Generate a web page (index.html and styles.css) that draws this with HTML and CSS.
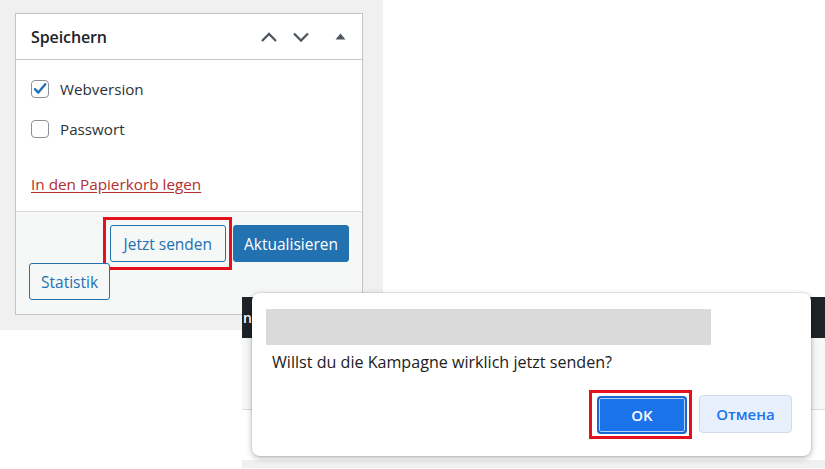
FILE: index.html
```html
<!DOCTYPE html>
<html lang="de">
<head>
<meta charset="utf-8">
<title>Speichern</title>
<link rel="stylesheet" href="styles.css">
</head>
<body>
<div class="page">
  <div class="wp-area">
    <div class="postbox">
      <div class="pb-header">
        <h2 class="pb-title">Speichern</h2>
        <div class="pb-actions">
          <svg class="ico chev" width="18" height="12" viewBox="0 0 18 12"><path d="M2 10 L9 3 L16 10" fill="none" stroke="#50575e" stroke-width="2.3"/></svg>
          <svg class="ico chev" width="18" height="12" viewBox="0 0 18 12"><path d="M2 2.5 L9 9.5 L16 2.5" fill="none" stroke="#50575e" stroke-width="2.3"/></svg>
          <svg class="ico tri" width="11" height="7" viewBox="0 0 11 7"><path d="M0.5 6.5 L5.5 0.5 L10.5 6.5 Z" fill="#50575e"/></svg>
        </div>
      </div>
      <div class="pb-body">
        <label class="check-row">
          <span class="cbox checked"><svg width="18" height="18" viewBox="0 0 18 18"><path d="M4 9.2 L7.3 12.6 L14.3 4.2" fill="none" stroke="#2271b1" stroke-width="2.4" stroke-linecap="round" stroke-linejoin="round"/></svg></span>
          <span class="check-label">Webversion</span>
        </label>
        <label class="check-row">
          <span class="cbox"></span>
          <span class="check-label">Passwort</span>
        </label>
        <a class="trash" href="#">In den Papierkorb legen</a>
      </div>
      <div class="pb-footer">
        <div class="btn-row">
          <span class="mark mark-send"><span class="btn btn-secondary btn-send">Jetzt senden</span></span>
          <span class="btn btn-primary">Aktualisieren</span>
        </div>
        <div class="btn-row left">
          <span class="btn btn-secondary btn-stat">Statistik</span>
        </div>
      </div>
    </div>
  </div>
  <div class="side-white"></div>
</div>

<div class="browser">
  <div class="adminbar"><span class="ab-text">n</span></div>
  <div class="content-area"></div>
  <div class="content-white"></div>
  <div class="content-bottom"></div>

  <div class="dialog">
    <div class="dlg-origin"></div>
    <p class="dlg-msg">Willst du die Kampagne wirklich jetzt senden?</p>
    <div class="dlg-buttons">
      <span class="mark mark-ok"><span class="dbtn dbtn-ok">OK</span></span>
      <span class="dbtn dbtn-cancel">Отмена</span>
    </div>
  </div>
</div>
</body>
</html>
```
FILE: styles.css
```css
* { box-sizing: border-box; }
html, body { margin: 0; padding: 0; }
body {
  width: 825px;
  height: 469px;
  overflow: hidden;
  background: #ffffff;
  font-family: "Open Sans", "Noto Sans", "Liberation Sans", sans-serif;
  color: #1d2327;
  position: relative;
}
.page { display: flex; }
.wp-area {
  width: 383px;
  height: 330px;
  background: #f0f0f1;
  padding: 13px 20px 0 15px;
}
.postbox {
  width: 348px;
  height: 302px;
  background: #fff;
  border: 1px solid #c3c4c7;
  display: flex;
  flex-direction: column;
}
.pb-header {
  height: 46px;
  border-bottom: 1px solid #c3c4c7;
  display: flex;
  align-items: center;
  padding: 0 16px 0 15px;
}
.pb-title {
  margin: 0;
  font-size: 16px;
  font-weight: 600;
  flex: 1;
  letter-spacing: -0.1px;
  color: #1d2327;
}
.pb-actions { display: flex; align-items: center; }
.ico { display: block; }
.chev { margin-left: 14px; }
.tri { margin-left: 25px; }
.pb-body {
  flex: 1;
  padding: 20px 15px 0 15px;
  display: flex;
  flex-direction: column;
}
.check-row {
  display: flex;
  align-items: center;
  height: 18px;
  margin-bottom: 22px;
}
.cbox {
  width: 18px;
  height: 18px;
  border: 1px solid #8c8f94;
  border-radius: 4px;
  background: #fff;
  display: block;
}
.cbox svg { display: block; margin: -1px; }
.check-label {
  margin-left: 11px;
  font-size: 15.2px;
  color: #2c3338;
}
.trash {
  margin-top: 14px;
  font-size: 15.3px;
  color: #b32d2e;
  text-decoration: underline;
  text-underline-offset: 2px;
  align-self: flex-start;
}
.pb-footer {
  height: 103px;
  background: #f6f7f7;
  border-top: 1px solid #dcdcde;
  padding: 13px 13px 0 13px;
}
.btn-row {
  display: flex;
  justify-content: flex-end;
  align-items: center;
  gap: 7px;
  height: 37px;
}
.btn-row.left { justify-content: flex-start; margin-top: 1px; }
.btn {
  display: flex;
  align-items: center;
  justify-content: center;
  height: 37px;
  padding: 0 12px;
  border-radius: 3px;
  font-size: 15.5px;
}
.btn-send { padding: 0 13px; }
.btn-stat { padding: 0 11px; }
.btn-secondary {
  border: 1px solid #2271b1;
  color: #2271b1;
  background: #f6f7f7;
}
.btn-primary {
  background: #2271b1;
  border: 1px solid #2271b1;
  color: #fff;
  font-weight: 500;
  padding: 0 10px;
}
.mark { display: block; border: 3px solid #e4101b; }
.mark-send { padding: 5px 3px 5px 4px; margin: -8px -6px -8px 0; }

.side-white { flex: 1; height: 330px; background: #fff; }

/* second screenshot with the browser dialog */
.browser {
  position: absolute;
  left: 242px;
  top: 297px;
  width: 583px;
  height: 172px;
  background: #fff;
}
.adminbar {
  height: 41px;
  background: #1d2327;
  display: flex;
  align-items: center;
}
.ab-text {
  color: #fff;
  font-size: 14px;
  font-weight: 600;
  margin-left: 1px;
}
.content-area { height: 72px; background: #f6f7f7; border-bottom: 1px solid #dcdcde; }
.content-white { height: 50px; background: #fff; }
.content-bottom { height: 8px; background: #f0f0f1; }

.dialog {
  position: absolute;
  left: 10px;
  top: -4px;
  width: 559px;
  height: 163px;
  background: #fff;
  border-radius: 8px;
  box-shadow: 0 0 0 1px rgba(0,0,0,0.06), 0 2px 6px rgba(0,0,0,0.28);
  padding: 16px 19px 0 14px;
  font-family: "Open Sans", "Noto Sans", "Liberation Sans", sans-serif;
}
.dlg-origin { width: 445px; height: 36px; background: #dadada; }
.dlg-msg {
  margin: 6px 0 0 6px;
  font-size: 16.1px;
  color: #202124;
  line-height: 22px;
}
.dlg-buttons {
  display: flex;
  justify-content: flex-end;
  align-items: flex-start;
  margin-top: 22px;
  gap: 7px;
}
.mark-ok { padding: 3px 2px 2px 5px; margin-top: -5px; }
.dbtn {
  display: flex;
  align-items: center;
  justify-content: center;
  height: 38px;
  border-radius: 4px;
  font-size: 15px;
  font-weight: 600;
}
.dbtn-ok {
  width: 90px;
  background: #1a73e8;
  color: #fff;
  border: 2px solid #1967d2;
  box-shadow: inset 0 0 0 1px #b6cff5;
}
.dbtn-cancel {
  width: 93px;
  background: #e8f0fe;
  color: #1a73e8;
  border: 1px solid #d2dcea;
}
```
